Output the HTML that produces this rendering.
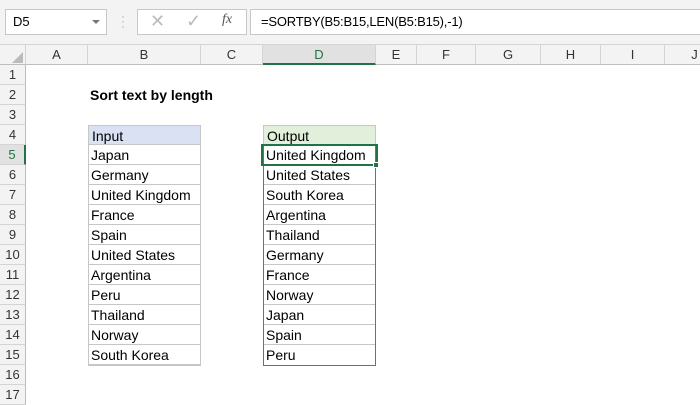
<!DOCTYPE html>
<html><head><style>
body{margin:0;width:700px;height:400px;overflow:hidden;background:#fff;font-family:"Liberation Sans",Calibri,sans-serif;position:relative}
.a{position:absolute;box-sizing:border-box}
.tb{left:0;top:0;width:700px;height:45px;background:#f3f3f3;border-bottom:1px solid #d4d4d4}
.box{background:#fff;border:1px solid #c8c8c8}
.ch{top:45px;height:20px;background:#f3f3f3;border-right:1px solid #d4d4d4;border-bottom:1px solid #bdbdbd;text-align:center;font-size:13px;line-height:19px;color:#333}
.rh{left:0;width:26px;height:20px;background:#f3f3f3;border-bottom:1px solid #d4d4d4;border-right:1px solid #bdbdbd;text-align:center;font-size:13px;line-height:20px;color:#333}
.c{height:20px;font-size:14px;line-height:21px;padding-left:3px;color:#000}
</style></head><body>
<div class="a tb"></div>
<div class="a box" style="left:5px;top:9px;width:102px;height:26px;font-size:13px;line-height:24px;padding-left:7px">D5</div>
<div class="a" style="left:92px;top:20px;width:0;height:0;border-left:4px solid transparent;border-right:4px solid transparent;border-top:4px solid #777"></div>
<div class="a" style="left:121px;top:14px;color:#aaa;font-size:12px;line-height:5px;">·<br>·<br>·</div>
<div class="a box" style="left:137px;top:9px;width:110px;height:26px"></div>
<div class="a" style="left:150px;top:11px;color:#bbb;font-size:18px">✕</div>
<div class="a" style="left:186px;top:11px;color:#bbb;font-size:18px">✓</div>
<div class="a" style="left:222px;top:12px;color:#555;font-size:14px;font-style:italic;font-family:'Liberation Serif',serif">fx</div>
<div class="a box" style="left:250px;top:9px;width:460px;height:26px;font-size:13px;line-height:24px;padding-left:10px;letter-spacing:-0.2px">=SORTBY(B5:B15,LEN(B5:B15),-1)</div>
<div class="a ch" style="left:0;width:26px"></div>
<div class="a" style="left:12px;top:52px;width:0;height:0;border-left:11px solid transparent;border-bottom:11px solid #bbb"></div>
<div class="a ch" style="left:26px;width:62px">A</div>
<div class="a ch" style="left:88px;width:113px">B</div>
<div class="a ch" style="left:201px;width:62px">C</div>
<div class="a ch" style="left:263px;width:113px;background:#e1e1e1;border-bottom:2px solid #217346;color:#217346">D</div>
<div class="a ch" style="left:376px;width:41px">E</div>
<div class="a ch" style="left:417px;width:59px">F</div>
<div class="a ch" style="left:476px;width:65px">G</div>
<div class="a ch" style="left:541px;width:60px">H</div>
<div class="a ch" style="left:601px;width:64px">I</div>
<div class="a ch" style="left:665px;width:60px">J</div>
<div class="a rh" style="top:65px">1</div><div class="a rh" style="top:85px">2</div><div class="a rh" style="top:105px">3</div><div class="a rh" style="top:125px">4</div>
<div class="a rh" style="top:145px;background:#e1e1e1;color:#217346;border-right:2px solid #217346">5</div>
<div class="a rh" style="top:165px">6</div><div class="a rh" style="top:185px">7</div><div class="a rh" style="top:205px">8</div><div class="a rh" style="top:225px">9</div><div class="a rh" style="top:245px">10</div><div class="a rh" style="top:265px">11</div><div class="a rh" style="top:285px">12</div><div class="a rh" style="top:305px">13</div><div class="a rh" style="top:325px">14</div><div class="a rh" style="top:345px">15</div><div class="a rh" style="top:365px">16</div><div class="a rh" style="top:385px">17</div>
<div class="a c" style="left:88px;top:85px;font-weight:bold;padding-left:2px">Sort text by length</div>
<div class="a" style="left:88px;top:125px;width:113px;height:241px;border:1px solid #c6c6c6"></div>
<div class="a c" style="left:88px;top:125px;width:113px;background:#d9e1f2;border:1px solid #c6c6c6">Input</div>
<div class="a" style="left:88px;top:145px;">
<div class="c" style="width:113px;box-sizing:border-box;border-bottom:1px solid #c6c6c6">Japan</div>
<div class="c" style="width:113px;box-sizing:border-box;border-bottom:1px solid #c6c6c6">Germany</div>
<div class="c" style="width:113px;box-sizing:border-box;border-bottom:1px solid #c6c6c6">United Kingdom</div>
<div class="c" style="width:113px;box-sizing:border-box;border-bottom:1px solid #c6c6c6">France</div>
<div class="c" style="width:113px;box-sizing:border-box;border-bottom:1px solid #c6c6c6">Spain</div>
<div class="c" style="width:113px;box-sizing:border-box;border-bottom:1px solid #c6c6c6">United States</div>
<div class="c" style="width:113px;box-sizing:border-box;border-bottom:1px solid #c6c6c6">Argentina</div>
<div class="c" style="width:113px;box-sizing:border-box;border-bottom:1px solid #c6c6c6">Peru</div>
<div class="c" style="width:113px;box-sizing:border-box;border-bottom:1px solid #c6c6c6">Thailand</div>
<div class="c" style="width:113px;box-sizing:border-box;border-bottom:1px solid #c6c6c6">Norway</div>
<div class="c" style="width:113px;box-sizing:border-box;border-bottom:1px solid #c6c6c6">South Korea</div>
</div>
<div class="a c" style="left:263px;top:125px;width:113px;background:#e2efda;border:1px solid #c6c6c6">Output</div>
<div class="a" style="left:263px;top:145px;">
<div class="c" style="width:113px;box-sizing:border-box;border-bottom:1px solid #c6c6c6">United Kingdom</div>
<div class="c" style="width:113px;box-sizing:border-box;border-bottom:1px solid #c6c6c6">United States</div>
<div class="c" style="width:113px;box-sizing:border-box;border-bottom:1px solid #c6c6c6">South Korea</div>
<div class="c" style="width:113px;box-sizing:border-box;border-bottom:1px solid #c6c6c6">Argentina</div>
<div class="c" style="width:113px;box-sizing:border-box;border-bottom:1px solid #c6c6c6">Thailand</div>
<div class="c" style="width:113px;box-sizing:border-box;border-bottom:1px solid #c6c6c6">Germany</div>
<div class="c" style="width:113px;box-sizing:border-box;border-bottom:1px solid #c6c6c6">France</div>
<div class="c" style="width:113px;box-sizing:border-box;border-bottom:1px solid #c6c6c6">Norway</div>
<div class="c" style="width:113px;box-sizing:border-box;border-bottom:1px solid #c6c6c6">Japan</div>
<div class="c" style="width:113px;box-sizing:border-box;border-bottom:1px solid #c6c6c6">Spain</div>
<div class="c" style="width:113px;box-sizing:border-box">Peru</div>
</div>
<div class="a" style="left:263px;top:145px;width:113px;height:221px;border:1px solid #4472c4"></div>
<div class="a" style="left:261px;top:144px;width:117px;height:22px;border:2px solid #217346"></div>
<div class="a" style="left:373px;top:162px;width:6px;height:6px;background:#217346;border:1px solid #fff"></div>
</body></html>
